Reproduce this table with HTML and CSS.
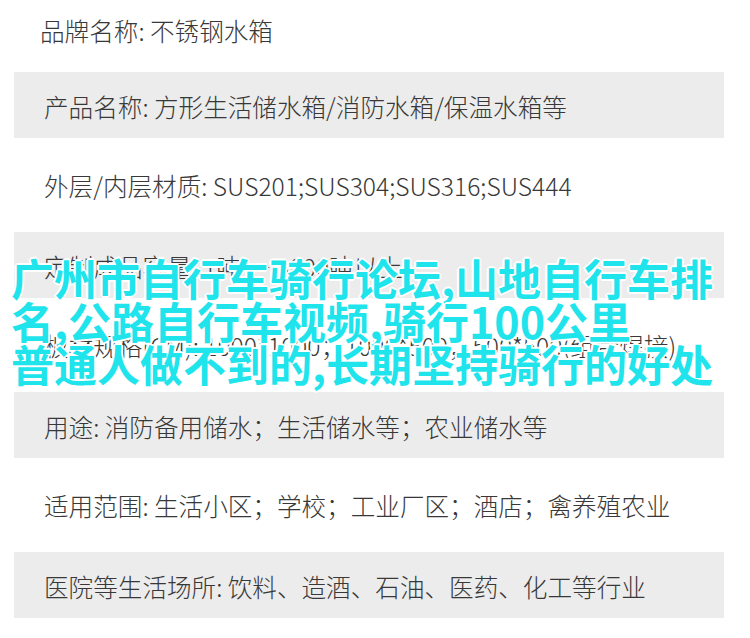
FILE: index.html
```html
<!DOCTYPE html>
<html lang="zh-CN">
<head>
    <meta charset="UTF-8">
    <meta name="viewport" content="width=device-width, initial-scale=1.0">
    <title>不锈钢水箱</title>
    <link rel="stylesheet" href="styles.css">
</head>
<body>
    <div class="sheet">
        <div class="spec first">品牌名称: 不锈钢水箱</div>
        <div class="spec shaded">产品名称: 方形生活储水箱/消防水箱/保温水箱等</div>
        <div class="spec">外层/内层材质: SUS201;SUS304;SUS316;SUS444</div>
        <div class="spec shaded">定制成品容量: 1吨 — 3800吨以上</div>
        <div class="spec">板材规格(CM): 1000*1000；1000*500；500*500(组合焊接)</div>
        <div class="spec shaded">用途: 消防备用储水；生活储水等；农业储水等</div>
        <div class="spec">适用范围: 生活小区；学校；工业厂区；酒店；禽养殖农业</div>
        <div class="spec shaded">医院等生活场所: 饮料、造酒、石油、医药、化工等行业</div>

        <!-- Title over the image -->
        <h1 class="caption">广州市自行车骑行论坛,山地自行车排<br>名,公路自行车视频,骑行100公里<br>普通人做不到的,长期坚持骑行的好处</h1>
    </div>
</body>
</html>
```

FILE: styles.css
```css
body {
    margin: 0;
    background-color: #fff;
    font-family: "Noto Sans CJK SC", "Noto Sans", sans-serif;
}

.sheet {
    position: relative;
    width: 750px;
    height: 638px;
    overflow: hidden;
}

.spec {
    display: flex;
    align-items: center;
    height: 94px;
    margin: 0 26px 0 14px;
    padding-left: 30px;
    font-size: 24.6px;
    font-weight: 300;
    color: #383838;
    white-space: nowrap;
}

.spec.first {
    height: 60px;
    padding-bottom: 12px;
    padding-left: 26px;
}

.spec.shaded {
    height: 66px;
    background-color: #ececec;
    padding-top: 2px;
    box-sizing: border-box;
}

.caption {
    position: absolute;
    left: 11px;
    top: 256px;
    margin: 0;
    font-size: 43px;
    line-height: 43px;
    font-weight: 700;
    color: #1fe4ec;
    white-space: nowrap;
    text-shadow:
        1px 1px 0 #fff, -1px -1px 0 #fff,
        1px -1px 0 #fff, -1px 1px 0 #fff,
        0 2px 0 #fff, 0 -2px 0 #fff,
        2px 0 0 #fff, -2px 0 0 #fff;
}
```
